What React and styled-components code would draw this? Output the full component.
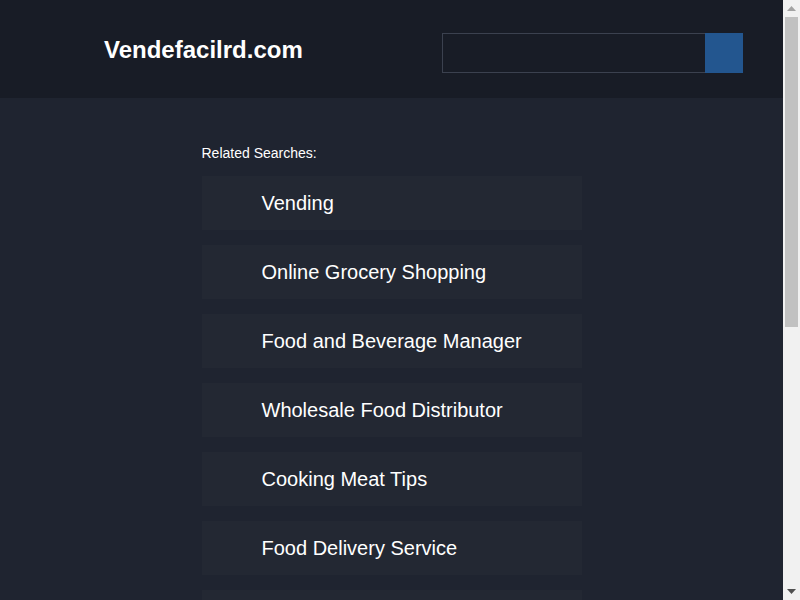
import styled, { createGlobalStyle } from "styled-components";

const GlobalStyle = createGlobalStyle`
  html, body {
    margin: 0;
    padding: 0;
    background: #1f2430;
    font-family: "Liberation Sans", Arial, sans-serif;
  }
`;

const Page = styled.div`
  margin-right: 17px;
`;

const Header = styled.header`
  height: 98px;
  background: #181c26;
  display: flex;
  align-items: center;
  justify-content: space-between;
  padding: 0 40px 0 104px;
  box-sizing: border-box;
`;

const Logo = styled.a`
  color: #ffffff;
  font-size: 24px;
  font-weight: bold;
  text-decoration: none;
  margin-top: 1px;
`;

const SearchForm = styled.form`
  display: flex;
  height: 40px;
  margin-top: 8px;
`;

const SearchInput = styled.input`
  width: 263px;
  height: 40px;
  box-sizing: border-box;
  background: #181c26;
  border: 1px solid #3b414f;
  border-right: none;
  color: #fff;
  outline: none;
`;

const SearchButton = styled.button`
  width: 38px;
  height: 40px;
  border: none;
  background: #23568f;
`;

const Main = styled.main`
  width: 380px;
  margin: 0 auto;
  padding: 47px 0 240px;
`;

const Label = styled.div`
  color: #ffffff;
  font-size: 14px;
  margin-bottom: 15px;
`;

const List = styled.div`
  display: flex;
  flex-direction: column;
  gap: 15px;
`;

const Item = styled.a`
  display: flex;
  align-items: center;
  height: 54px;
  padding-left: 60px;
  background: #232833;
  color: #ffffff;
  font-size: 20px;
  text-decoration: none;
`;

/* fake window scrollbar, as in the screenshot */
const Scrollbar = styled.div`
  position: fixed;
  top: 0;
  right: 0;
  width: 17px;
  height: 100vh;
  background: #f1f1f1;
  display: flex;
  flex-direction: column;
  align-items: center;
`;

const Arrow = styled.div`
  width: 17px;
  height: 17px;
  flex-shrink: 0;
  display: flex;
  align-items: center;
  justify-content: center;
`;

const Thumb = styled.div`
  width: 13px;
  height: 310px;
  background: #c1c1c1;
`;

const Spacer = styled.div`
  flex: 1;
`;

const searches = [
  "Vending",
  "Online Grocery Shopping",
  "Food and Beverage Manager",
  "Wholesale Food Distributor",
  "Cooking Meat Tips",
  "Food Delivery Service",
  "Restaurant Equipment",
  "Snack Vending Machines",
  "Grocery Delivery",
  "Catering Services",
];

const App = () => {
  return (
    <>
      <GlobalStyle />
      <Page>
        <Header>
          <Logo href="#">Vendefacilrd.com</Logo>
          <SearchForm onSubmit={(e) => e.preventDefault()}>
            <SearchInput type="text" />
            <SearchButton type="submit" />
          </SearchForm>
        </Header>
        <Main>
          <Label>Related Searches:</Label>
          <List>
            {searches.map((s) => (
              <Item key={s} href="#">
                {s}
              </Item>
            ))}
          </List>
        </Main>
      </Page>
      <Scrollbar>
        <Arrow>
          <svg width="9" height="5" viewBox="0 0 9 5">
            <polygon points="0,5 4.5,0 9,5" fill="#a3a3a3" />
          </svg>
        </Arrow>
        <Thumb />
        <Spacer />
        <Arrow>
          <svg width="9" height="5" viewBox="0 0 9 5">
            <polygon points="0,0 9,0 4.5,5" fill="#505050" />
          </svg>
        </Arrow>
      </Scrollbar>
    </>
  );
};

export default App;
